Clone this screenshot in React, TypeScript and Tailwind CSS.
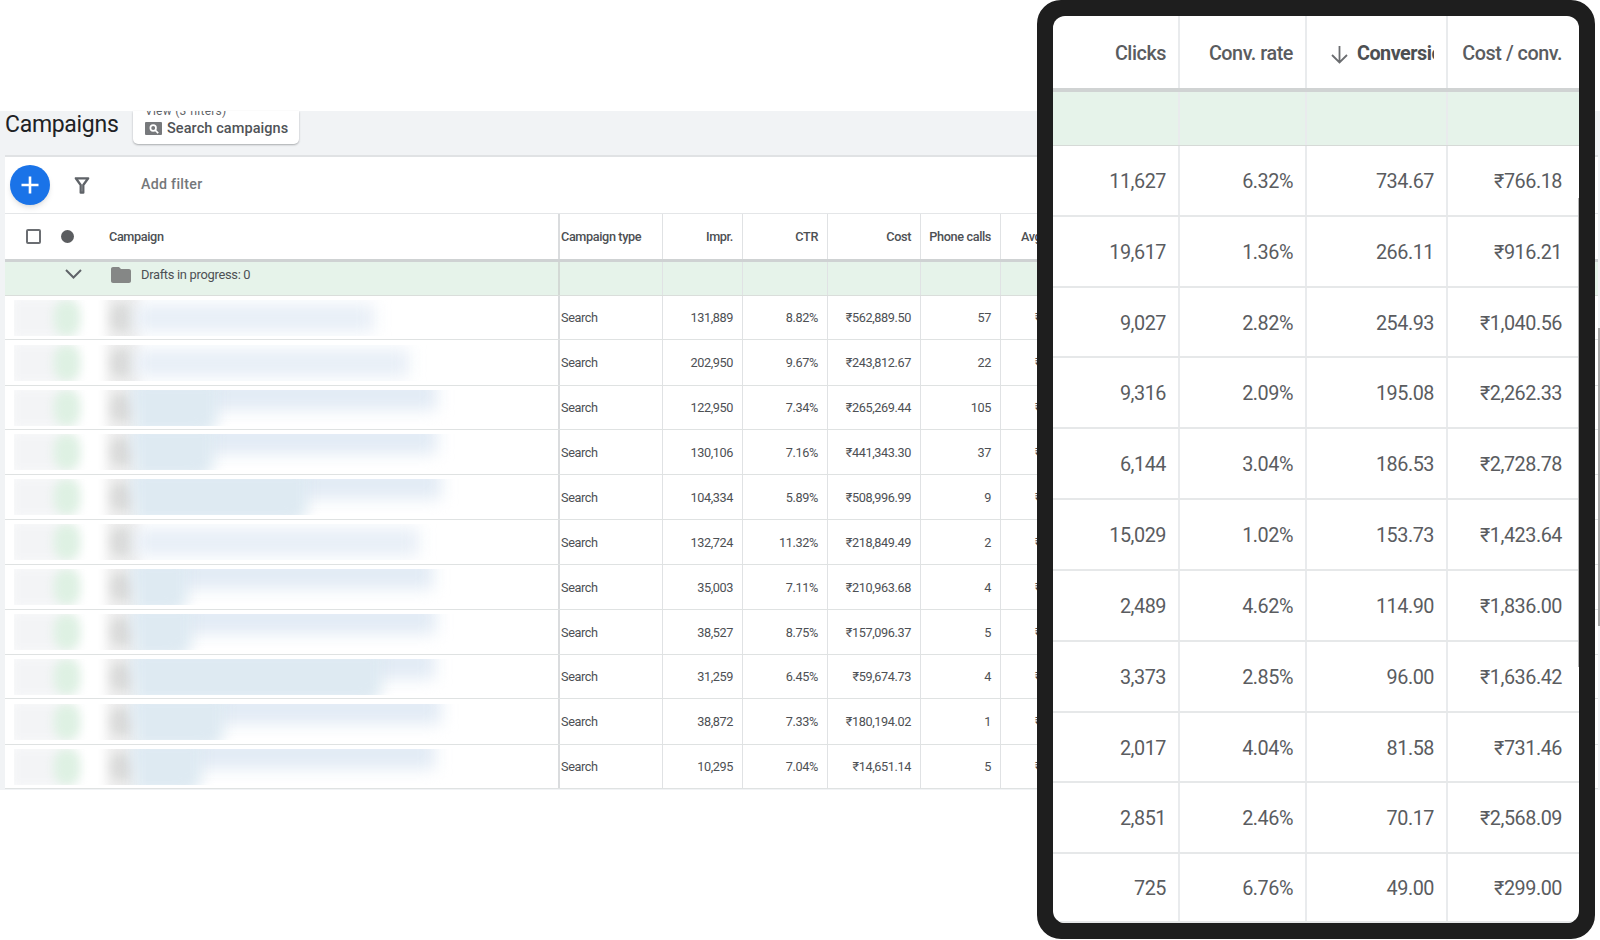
import React from 'react'
import { clsx } from 'clsx'
import { MdFolder } from 'react-icons/md'

interface Campaign {
  impr: string
  ctr: string
  cost: string
  calls: string
  clicks: string
  convRate: string
  conversions: string
  costPerConv: string
  // blurred name: width of the first and of the second line
  line1: number
  line2: number
}

const CAMPAIGNS: Campaign[] = [
  { impr: '131,889', ctr: '8.82%', cost: '₹562,889.50', calls: '57', clicks: '11,627', convRate: '6.32%', conversions: '734.67', costPerConv: '₹766.18', line1: 240, line2: 0 },
  { impr: '202,950', ctr: '9.67%', cost: '₹243,812.67', calls: '22', clicks: '19,617', convRate: '1.36%', conversions: '266.11', costPerConv: '₹916.21', line1: 275, line2: 0 },
  { impr: '122,950', ctr: '7.34%', cost: '₹265,269.44', calls: '105', clicks: '9,027', convRate: '2.82%', conversions: '254.93', costPerConv: '₹1,040.56', line1: 303, line2: 76 },
  { impr: '130,106', ctr: '7.16%', cost: '₹441,343.30', calls: '37', clicks: '9,316', convRate: '2.09%', conversions: '195.08', costPerConv: '₹2,262.33', line1: 303, line2: 72 },
  { impr: '104,334', ctr: '5.89%', cost: '₹508,996.99', calls: '9', clicks: '6,144', convRate: '3.04%', conversions: '186.53', costPerConv: '₹2,728.78', line1: 307, line2: 166 },
  { impr: '132,724', ctr: '11.32%', cost: '₹218,849.49', calls: '2', clicks: '15,029', convRate: '1.02%', conversions: '153.73', costPerConv: '₹1,423.64', line1: 285, line2: 0 },
  { impr: '35,003', ctr: '7.11%', cost: '₹210,963.68', calls: '4', clicks: '2,489', convRate: '4.62%', conversions: '114.90', costPerConv: '₹1,836.00', line1: 299, line2: 46 },
  { impr: '38,527', ctr: '8.75%', cost: '₹157,096.37', calls: '5', clicks: '3,373', convRate: '2.85%', conversions: '96.00', costPerConv: '₹1,636.42', line1: 302, line2: 50 },
  { impr: '31,259', ctr: '6.45%', cost: '₹59,674.73', calls: '4', clicks: '2,017', convRate: '4.04%', conversions: '81.58', costPerConv: '₹731.46', line1: 301, line2: 240 },
  { impr: '38,872', ctr: '7.33%', cost: '₹180,194.02', calls: '1', clicks: '2,851', convRate: '2.46%', conversions: '70.17', costPerConv: '₹2,568.09', line1: 307, line2: 82 },
  { impr: '10,295', ctr: '7.04%', cost: '₹14,651.14', calls: '5', clicks: '725', convRate: '6.76%', conversions: '49.00', costPerConv: '₹299.00', line1: 301, line2: 60 }
]

const GRID = 'grid grid-cols-[555px_103px_80px_85px_93px_80px_1fr]'
const PANEL_GRID = 'grid grid-cols-[127px_127px_141px_1fr]'

// Row heights of the two tables, border included
const ROW_HEIGHTS = [44, 46, 44, 45, 45, 45, 45, 45, 44, 46, 44]
const PANEL_ROW_HEIGHTS = [71, 71, 70, 71, 71, 71, 71, 71, 70, 71, 69]

function RedactedName({ line1, line2 }: { line1: number; line2: number }) {
  return (
    <div className="relative ml-[9px] h-9 w-[480px] overflow-hidden">
      <div className="absolute -top-1 -left-1 h-11 w-16 bg-[#f3f4f6] blur-[6px]" />
      <div className="absolute top-0 left-[40px] h-9 w-[26px] rounded-full bg-[#def1e3] blur-[5px]" />
      <div className="absolute -top-2 left-[92px] h-13 w-[34px] bg-[#eeeeee] blur-[5px]" />
      <div className="absolute top-1 left-[97px] h-7 w-[22px] rounded-full bg-[#dadbda] blur-[5px]" />
      <div
        className={clsx(
          'absolute left-[120px] blur-[8px]',
          line2 ? '-top-3 h-8 bg-[#e2ebf5]' : 'top-1 h-7 bg-[#e8eff7]'
        )}
        style={{ width: line1 }}
      />
      {line2 > 0 && (
        <div
          className="absolute -top-2 left-[120px] h-13 rounded-br-2xl bg-[#deeaf2] blur-[7px]"
          style={{ width: line2 + 8 }}
        />
      )}
    </div>
  )
}

function Cell({ children, className }: { children?: React.ReactNode; className?: string }) {
  return (
    <div
      className={clsx('flex items-center justify-end overflow-hidden border-r border-[#e0e2e4] pt-px pr-[9px]', className)}
    >
      {children}
    </div>
  )
}

function PanelCell({ children, last }: { children?: React.ReactNode; last?: boolean }) {
  return (
    <div
      className={clsx(
        'flex items-center justify-end pt-[3px] whitespace-nowrap',
        last ? 'pr-[17px]' : 'border-r-2 border-[#e9ebed] pr-3'
      )}
    >
      {children}
    </div>
  )
}

function ViewSwitcher() {
  return (
    <div className="ml-4 flex h-[33px] w-[166px] flex-col overflow-hidden rounded-b-[5px] bg-white pl-3 shadow-[0_1px_2px_rgba(60,64,67,0.4)]">
      <div className="-mt-[8px] h-4 text-[12px] leading-4 tracking-[0.25px] whitespace-nowrap text-[#5f6368]">
        View (3 filters)
      </div>
      <div className="flex items-center whitespace-nowrap">
        <svg width="17" height="13" viewBox="0 0 17 13">
          <rect width="17" height="13" rx="1" fill="#77797c" />
          <circle cx="8.2" cy="6" r="2.8" fill="none" stroke="#fff" strokeWidth="1.7" />
          <path d="M10 8l3.2 3.2" stroke="#fff" strokeWidth="1.7" />
        </svg>
        <span className="ml-[5px] pt-px text-[14.5px] leading-[17px] font-medium tracking-[0.08px] text-[#505357]">
          Search campaigns
        </span>
      </div>
    </div>
  )
}

function CampaignTable() {
  return (
    <div className="mr-[2px] ml-[5px] bg-white text-[12.7px] tracking-[-0.38px] text-[#4d5054]">
      <div className={`${GRID} h-[45px] font-medium whitespace-nowrap`}>
        <div className="flex items-center border-r-2 border-[#dadcde]">
          <div className="ml-[21px] size-[15px] rounded-[2px] border-2 border-[#6b6e72]" />
          <div className="ml-5 size-[13px] rounded-full bg-[#5b5d60]" />
          <span className="ml-[35px]">Campaign</span>
        </div>
        <Cell className="justify-start! pl-px">Campaign type</Cell>
        <Cell>Impr.</Cell>
        <Cell>CTR</Cell>
        <Cell>Cost</Cell>
        <Cell>Phone calls</Cell>
        <div className="flex items-center pl-[20px]">Avg. CPC</div>
      </div>
      <div className={`${GRID} h-[37px] border-t-3 border-b border-t-[#cfd2d3] border-b-[#dadedb] bg-[#e6f3ea]`}>
        <div className="flex items-center border-r-2 border-[#d3d9d5] pb-[7px]">
          <svg className="-mt-0.5 ml-[60px]" width="17" height="10" viewBox="0 0 17 10">
            <path d="M1 1l7.5 7.5L16 1" fill="none" stroke="#5f6368" strokeWidth="2" />
          </svg>
          <MdFolder className="ml-[27px] size-6 text-[#858786]" />
          <span className="ml-2 text-[12.9px] tracking-[-0.3px]">Drafts in progress: 0</span>
        </div>
        <Cell />
        <Cell />
        <Cell />
        <Cell />
        <Cell />
        <div />
      </div>
      {CAMPAIGNS.map((c, i) => (
        <div key={i} className={`${GRID} border-b border-[#dfe2e2]`} style={{ height: ROW_HEIGHTS[i] }}>
          <div className="flex items-center border-r-2 border-[#dadcde]">
            <RedactedName line1={c.line1} line2={c.line2} />
          </div>
          <Cell className="justify-start! pl-px">Search</Cell>
          <Cell>{c.impr}</Cell>
          <Cell>{c.ctr}</Cell>
          <Cell>{c.cost}</Cell>
          <Cell>{c.calls}</Cell>
          <div className="flex items-center pt-px pl-[34px]">₹</div>
        </div>
      ))}
    </div>
  )
}

function MetricsPanel() {
  return (
    <div className="absolute top-0 left-[1037px] h-[939px] w-[558px] rounded-[24px] border-16 border-[#1e1e1e] bg-[#1e1e1e]">
      <div className="relative h-full overflow-hidden rounded-[12px] bg-white text-[19.8px] tracking-[-0.45px] text-[#5a5c5f]">
        <div className={`${PANEL_GRID} h-[72px] font-medium`}>
          <PanelCell>Clicks</PanelCell>
          <PanelCell>Conv. rate</PanelCell>
          <PanelCell>
            <svg className="mt-0.5 mr-[9px] shrink-0" width="17" height="18" viewBox="0 0 17 18">
              <path d="M8.5 0v16M1 9l7.5 7.5L16 9" fill="none" stroke="#6b6d70" strokeWidth="1.8" />
            </svg>
            <div className="w-[77px] overflow-hidden font-bold tracking-[-0.5px] text-[#4d4f52]">Conversions</div>
          </PanelCell>
          <PanelCell last>Cost / conv.</PanelCell>
        </div>
        <div className={`${PANEL_GRID} h-[58px] border-t-4 border-b border-t-[#d0d3d3] border-b-[#d6dad7] bg-[#e6f3ea]`}>
          <PanelCell />
          <PanelCell />
          <PanelCell />
          <PanelCell last />
        </div>
        {CAMPAIGNS.map((c, i) => (
          <div key={i} className={`${PANEL_GRID} border-b-2 border-[#e6e8e9]`} style={{ height: PANEL_ROW_HEIGHTS[i] }}>
            <PanelCell>{c.clicks}</PanelCell>
            <PanelCell>{c.convRate}</PanelCell>
            <PanelCell>{c.conversions}</PanelCell>
            <PanelCell last>{c.costPerConv}</PanelCell>
          </div>
        ))}
        <div className="absolute top-[182px] right-0 h-[469px] w-px bg-[#b5b5b5]" />
      </div>
    </div>
  )
}

export default function App() {
  return (
    <div className="relative h-[940px] w-[1600px] overflow-hidden bg-white pt-[111px] font-[Roboto,sans-serif]">
      <div className="relative h-[679px] bg-[#f1f3f5]">
        <div className="flex h-[44px] items-start">
          <h1 className="ml-[5px] w-[112px] pt-[2px] text-[23px] leading-6 tracking-[-0.3px] whitespace-nowrap text-[#202124]">
            Campaigns
          </h1>
          <ViewSwitcher />
        </div>
        <div className="mr-[2px] ml-[5px] flex h-[59px] items-center border-t-2 border-b border-t-[#e0e2e4] border-b-[#e4e6e8] bg-white">
          <button className="ml-[5px] flex size-10 items-center justify-center rounded-full bg-[#1a73e8] shadow-md">
            <svg width="18" height="18" viewBox="0 0 18 18">
              <path d="M9 .5v17M.5 9h17" stroke="#fff" strokeWidth="2.6" />
            </svg>
          </button>
          <svg className="ml-6" width="16" height="17" viewBox="0 0 16 17">
            <path d="M1.8 1.3h12.4L9.3 8v7.7H6.7V8z" fill="none" stroke="#5f6368" strokeWidth="2.3" strokeLinejoin="round" />
          </svg>
          <span className="ml-[51px] text-[14.2px] font-medium tracking-[0.3px] text-[#74777a]">Add filter</span>
        </div>
        <CampaignTable />
        <div className="absolute top-[217px] right-0 h-[298px] w-[2px] bg-[#a9a9a9]" />
      </div>
      <MetricsPanel />
    </div>
  )
}
